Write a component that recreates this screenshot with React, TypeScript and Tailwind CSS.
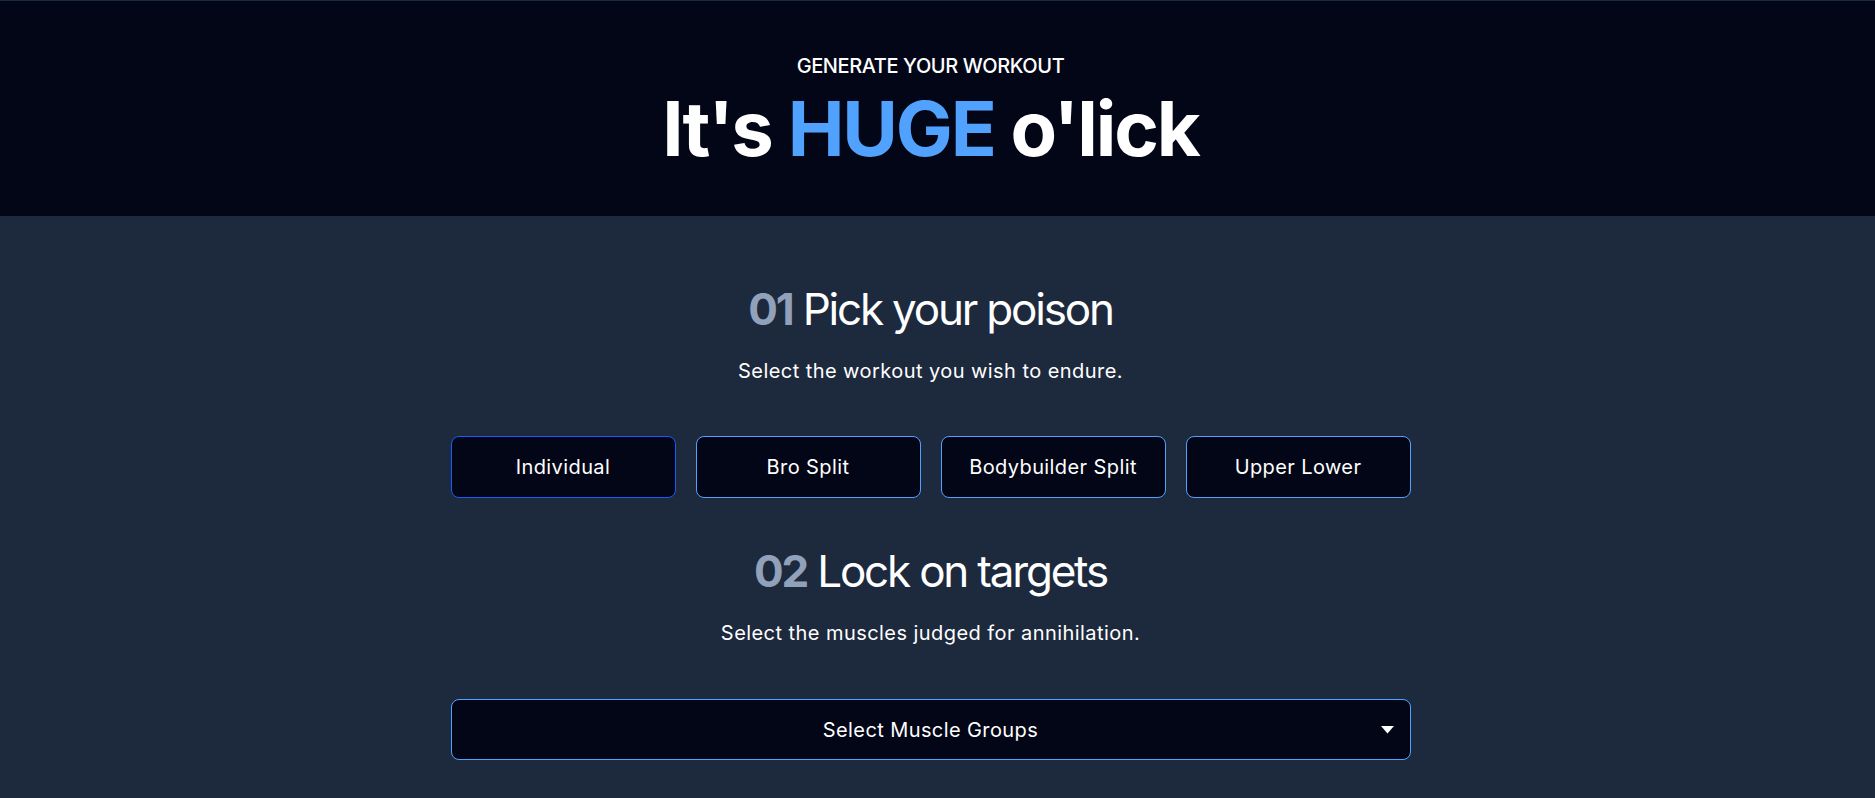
const workoutTypes = ["Individual", "Bro Split", "Bodybuilder Split", "Upper Lower"];

function SectionHeader({ index, title, subtitle }: { index: string; title: string; subtitle: string }) {
  return (
    <div className="flex flex-col items-center">
      <h2 className="text-[44px] leading-[52px] tracking-[-0.05em] text-white">
        <span className="font-bold text-slate-400">{index}</span> {title}
      </h2>
      <p className="mt-[22px] text-[20px] leading-[28px] tracking-[0.022em] text-white">{subtitle}</p>
    </div>
  );
}

export default function App() {
  return (
    <div
      className="min-h-screen bg-slate-800"
      style={{ fontFamily: "Inter, 'Noto Sans', sans-serif" }}
    >
      <header className="border-t border-slate-800 bg-[#020617] pt-[51px] pb-[50px] pr-[14px]">
        <div className="flex flex-col items-center">
          <p className="text-[20px] font-medium uppercase leading-[28px] tracking-[-0.02em] text-white">
            Generate your workout
          </p>
          <h1 className="mt-[10px] text-[76px] font-bold leading-[76px] tracking-[-0.028em] text-white">
            It's <span className="text-blue-400">HUGE</span> o'lick
          </h1>
        </div>
      </header>

      <main className="flex flex-col items-center pt-[67px] pr-[14px]">
        <SectionHeader
          index="01"
          title="Pick your poison"
          subtitle="Select the workout you wish to endure."
        />
        <div className="mt-[51px] grid w-[960px] grid-cols-4 gap-5">
          {workoutTypes.map((type, i) => (
            <button
              key={type}
              className={`h-[62px] rounded-lg border bg-[#020617] text-[20px] tracking-[0.02em] text-white ${
                i === 0 ? "border-blue-600" : "border-blue-400"
              }`}
            >
              {type}
            </button>
          ))}
        </div>

        <div className="mt-[47px]">
          <SectionHeader
            index="02"
            title="Lock on targets"
            subtitle="Select the muscles judged for annihilation."
          />
        </div>

        <button className="relative mt-[52px] flex h-[61px] w-[960px] items-center justify-center rounded-lg border border-blue-400 bg-[#020617] text-[20px] tracking-[0.02em] text-white">
          Select Muscle Groups
          <svg
            className="absolute right-[16px] top-1/2 -translate-y-1/2"
            width="13"
            height="8"
            viewBox="0 0 13 8"
          >
            <polygon points="0,0 13,0 6.5,7.5" fill="white" />
          </svg>
        </button>
      </main>
    </div>
  );
}
